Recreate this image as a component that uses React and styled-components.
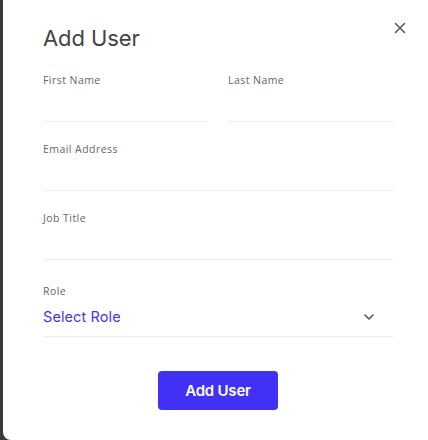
import React from "react";
import styled, { createGlobalStyle } from "styled-components";

const Global = createGlobalStyle`
  html, body {
    margin: 0;
    padding: 0;
    background: #3a3a3a;
    overflow: hidden;
  }
  * { box-sizing: border-box; }
`;

const Card = styled.div`
  position: relative;
  margin-left: 3px;
  width: 425px;
  height: 440px;
  background: #fff;
  border-radius: 0 0 0 8px;
  padding: 24px 35px 0 40px;
  font-family: Inter, "Noto Sans", sans-serif;
`;

const Title = styled.h2`
  margin: 0;
  font-size: 22px;
  line-height: 28px;
  font-weight: 400;
  color: #444;
  letter-spacing: -0.1px;
`;

const Close = styled.button`
  position: absolute;
  top: 22px;
  right: 22px;
  width: 12px;
  height: 12px;
  padding: 0;
  border: 0;
  background: none;
  display: flex;
  cursor: pointer;
`;

const Form = styled.form`
  width: 350px;
  margin-top: 21px;
  display: flex;
  flex-direction: column;
`;

const Row = styled.div`
  display: grid;
  grid-template-columns: minmax(0, 1fr) minmax(0, 1fr);
  column-gap: 20px;
`;

const Field = styled.label`
  display: flex;
  flex-direction: column;
  min-width: 0;
  margin-top: ${(p) => p.$gap || 0}px;
`;

const Label = styled.span`
  font-family: "Open Sans", sans-serif;
  font-size: 10.5px;
  line-height: 14px;
  font-weight: 400;
  color: #666;
  letter-spacing: 0.45px;
`;

const Input = styled.input`
  width: 100%;
  min-width: 0;
  height: 35px;
  border: 0;
  border-bottom: 1px solid #eeeeee;
  outline: none;
  padding: 0;
  font: inherit;
  font-size: 14px;
  background: transparent;
`;

const SelectBox = styled.div`
  height: 39px;
  border-bottom: 1px solid #eeeeee;
  display: flex;
  align-items: center;
  justify-content: space-between;
  padding-right: 19px;
  padding-bottom: 1px;
`;

const SelectText = styled.span`
  font-size: 14.5px;
  color: #3f35ee;
  letter-spacing: 0.1px;
`;

const Actions = styled.div`
  display: flex;
  justify-content: center;
  margin-top: 34px;
`;

const Button = styled.button`
  width: 120px;
  height: 39px;
  border: 0;
  border-radius: 4px;
  background: #4130f5;
  color: #fff;
  font-family: Inter, "Liberation Sans", sans-serif;
  font-size: 15px;
  font-weight: 600;
  letter-spacing: -0.2px;
  cursor: pointer;
`;

export default function App() {
  return (
    <>
      <Global />
      <Card>
        <Title>Add User</Title>
        <Close aria-label="Close">
          <svg width="12" height="12" viewBox="0 0 12 12">
            <path d="M1.5 1.5 L10.5 10.5 M10.5 1.5 L1.5 10.5" stroke="#555" strokeWidth="1.5" strokeLinecap="round" />
          </svg>
        </Close>
        <Form>
          <Row>
            <Field>
              <Label>First Name</Label>
              <Input />
            </Field>
            <Field>
              <Label>Last Name</Label>
              <Input />
            </Field>
          </Row>
          <Field $gap={20}>
            <Label>Email Address</Label>
            <Input />
          </Field>
          <Field $gap={20}>
            <Label>Job Title</Label>
            <Input />
          </Field>
          <Field $gap={24}>
            <Label>Role</Label>
            <SelectBox>
              <SelectText>Select Role</SelectText>
              <svg width="10" height="6" viewBox="0 0 10 6">
                <path d="M1 1 L5 5 L9 1" stroke="#555" strokeWidth="1.6" fill="none" strokeLinecap="round" strokeLinejoin="round" />
              </svg>
            </SelectBox>
          </Field>
          <Actions>
            <Button type="button">Add User</Button>
          </Actions>
        </Form>
      </Card>
    </>
  );
}
